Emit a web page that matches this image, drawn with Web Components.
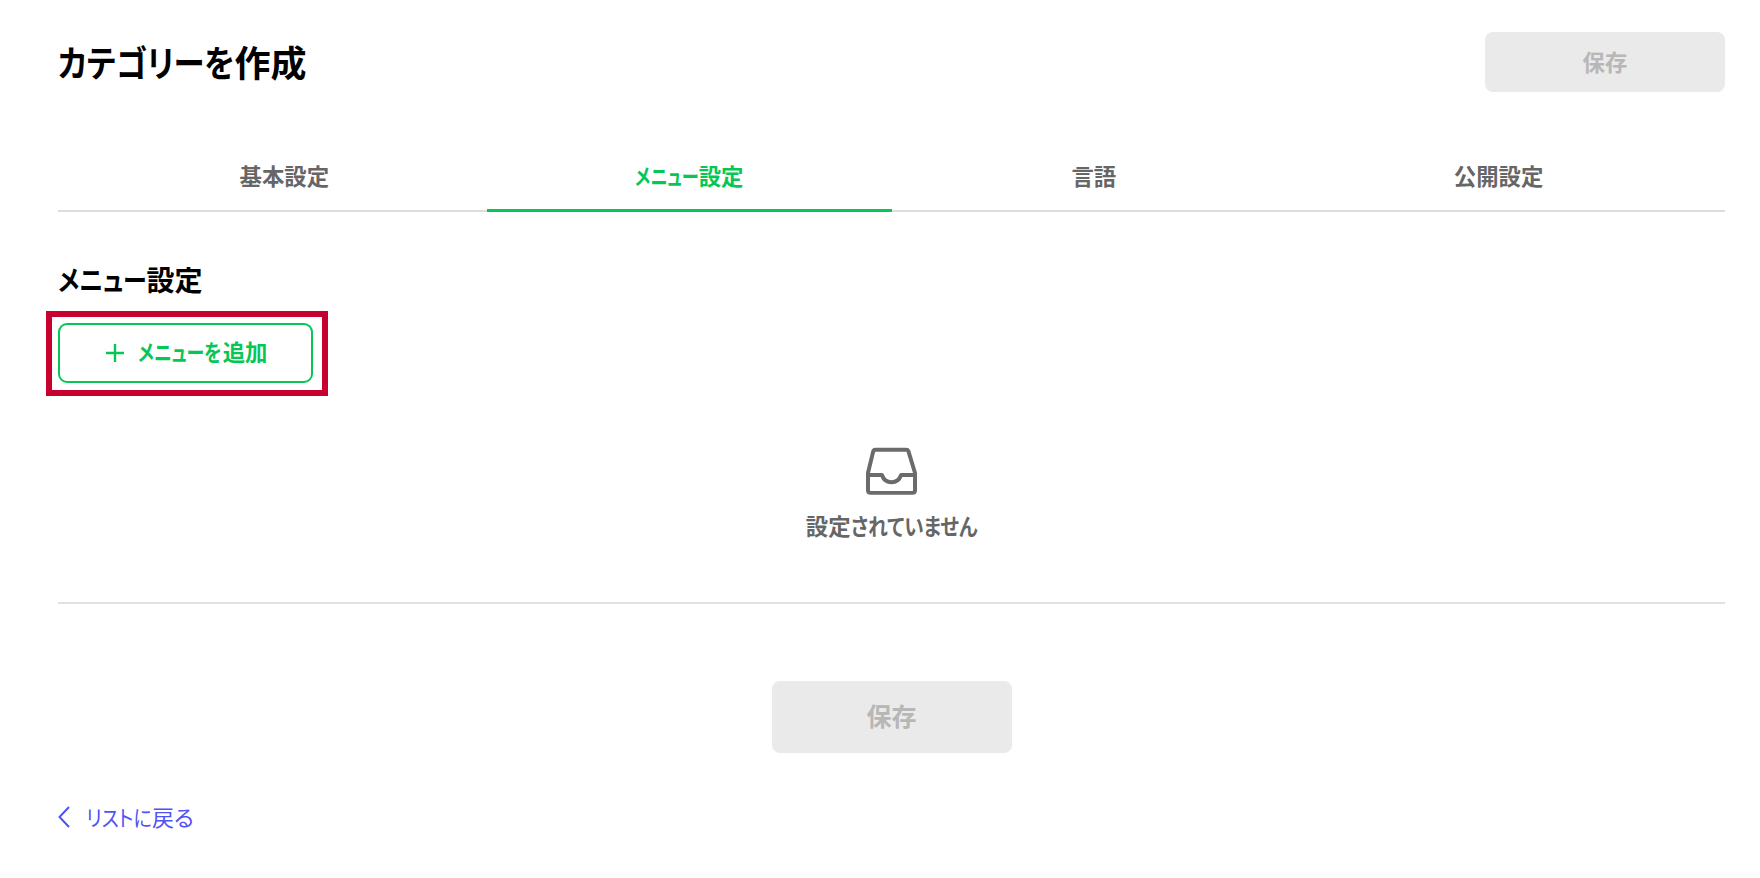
<!DOCTYPE html>
<html lang="ja"><head><meta charset="utf-8"><title>カテゴリーを作成</title>
<style>
html,body{margin:0;background:#fff}
body{font-family:"Noto Sans CJK JP","Noto Sans",sans-serif;font-feature-settings:"palt";color:#000}
</style></head><body>
<category-page></category-page>
<script>
function def(name,html){customElements.define(name,class extends HTMLElement{constructor(){super();this.attachShadow({mode:'open'}).innerHTML=html;}})}
def('save-button',`<style>
:host{display:flex;align-items:center;justify-content:center;box-sizing:border-box;width:240px;height:60px;padding-bottom:2px;background:#eaeaea;border-radius:8px;color:#b7b7b7;font-weight:700;font-size:22.4px;line-height:1}
:host([large]){height:72px;font-size:25px;padding-bottom:3px}
</style><slot></slot>`);
def('tab-item',`<style>
:host{flex:1 1 0;display:flex;align-items:center;justify-content:center;box-sizing:border-box;height:72px;padding-top:1px;border-bottom:3px solid transparent;font-size:22.4px;font-weight:700;color:#666;line-height:1}
:host([active]){color:#06c755;border-bottom-color:#06c755}
</style><slot></slot>`);
def('tab-bar',`<style>
:host{display:flex;padding:0 24px;margin-top:48px;box-shadow:inset 0 -2px 0 #ddd}
</style><slot></slot>`);
def('add-button',`<style>
:host{display:block;position:relative;box-sizing:border-box;width:255px;height:60px;border:2px solid #06c755;border-radius:9px;color:#06c755;font-size:22.4px;font-weight:700;line-height:1}
.in{box-sizing:border-box;height:100%;padding-left:3px;display:flex;align-items:center;justify-content:center;gap:14px}
.in span{margin-top:-3px}
svg{display:block;width:18px;height:18px}
.mark{position:absolute;left:-14px;top:-14px;width:270px;height:73px;border:6px solid #c8002f;pointer-events:none}
</style><div class="in"><svg viewBox="0 0 18 18"><path d="M9 0V18M0 9H18" fill="none" stroke="#06c755" stroke-width="2.4"/></svg><span><slot></slot></span></div><div class="mark"></div>`);
def('empty-state',`<style>
:host{display:flex;flex-direction:column;align-items:center;color:#666;font-size:22.4px;font-weight:700;line-height:1;padding-top:64px}
svg{display:block;width:53px;height:50px}
.t{margin-top:17px;height:22px;display:flex;align-items:center}
</style><svg viewBox="225 50 160 150"><path d="M256 58H350Q354 58 356 62L376 128V180Q376 188 368 188H242Q234 188 234 180V128L250 62Q252 58 256 58ZM234 134H276Q284 156 305 156Q326 156 334 134H376" fill="none" stroke="#6b6b6b" stroke-width="12" stroke-linejoin="round"/></svg><div class="t"><slot></slot></div>`);
def('back-link',`<style>
:host{display:flex;align-items:center;gap:16px;height:30px;margin-top:49px;color:#4f52f5;font-size:22px;line-height:1}
svg{display:block;width:12px;height:22px}
div{padding-bottom:2px}
</style><svg viewBox="0 0 12 22"><path d="M11 1L1.5 11L11 21" fill="none" stroke="#4f52f5" stroke-width="2"/></svg><div><slot></slot></div>`);
def('category-page',`<style>
:host{display:block;box-sizing:border-box;width:1760px;height:878px;padding:32px 35px 0 58px}
header{display:flex;justify-content:space-between;align-items:center}
h1{margin:0;font-size:36px;line-height:58px;height:60px;font-weight:700;color:#000}
h2{margin:49px 0 26px;font-size:28px;line-height:36px;font-weight:700;color:#000}
.n{display:inline-block;transform-origin:0 50%;transform:scaleX(var(--s));margin-right:calc(var(--c) * -1px)}
hr{border:0;height:2px;background:#e2e2e2;margin:66px 0 0}
.foot{display:flex;justify-content:center;margin-top:77px}
</style>
<header><h1><span class="n" style="--s:.87;--c:26">カテゴリーを</span>作成</h1><save-button>保存</save-button></header>
<tab-bar><tab-item>基本設定</tab-item><tab-item active><span class="n" style="--s:.77;--c:19">メニュー</span>設定</tab-item><tab-item>言語</tab-item><tab-item>公開設定</tab-item></tab-bar>
<h2><span class="n" style="--s:.855;--c:15">メニュー</span>設定</h2>
<add-button><span class="n" style="--s:.8;--c:20">メニューを</span>追加</add-button>
<empty-state><span>設定<span class="n" style="--s:.875;--c:18">されていません</span></span></empty-state>
<hr>
<div class="foot"><save-button large>保存</save-button></div>
<back-link><span class="n" style="--s:.865;--c:10">リストに</span>戻る</back-link>`);
</script></body></html>
